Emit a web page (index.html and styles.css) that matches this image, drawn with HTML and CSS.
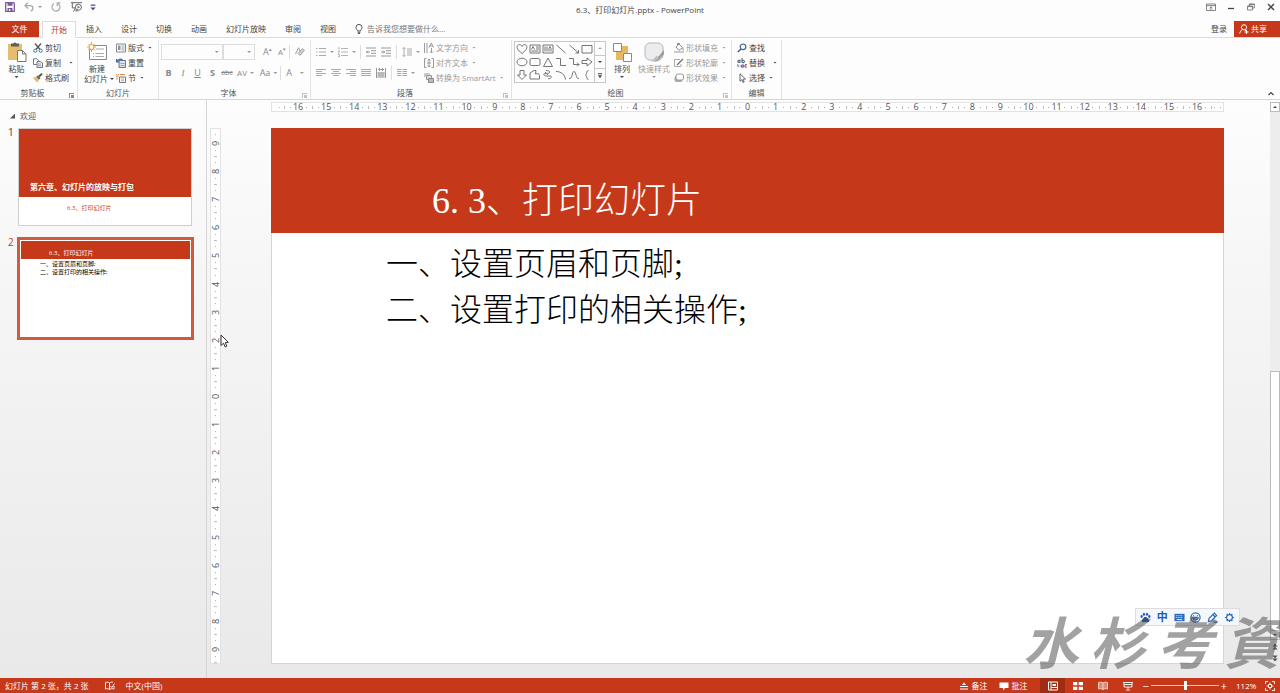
FILE: index.html
```html
<!DOCTYPE html>
<html lang="zh-CN">
<head>
<meta charset="utf-8">
<title>6.3、打印幻灯片.pptx - PowerPoint</title>
<link rel="stylesheet" href="styles.css">
</head>
<body>
<div class="app">
  <header class="titlebar">
    <div class="quick">
      <button class="tool" aria-label="保存"><svg class="ic" viewBox="0 0 10 10"><path d="M.7.7h8l.6.6v8H.7z" fill="#fff" stroke="#7b5a96" stroke-width="1.3"/><path d="M2.5.8h5v3h-5zM2.5 6h5v3.5h-5z" fill="#7b5a96"/><path d="M4 7h1.2v2H4z" fill="#fff"/></svg></button>
      <button class="tool undo" aria-label="撤消"><svg class="ic" viewBox="0 0 10 10"><path d="M4 .8L1 3.6l3 2.8M1 3.6h5.2c3.5 0 3.6 4.6.3 5.6" fill="none" stroke="#aaa" stroke-width="1.3"/></svg><i class="arr dim"></i></button>
      <button class="tool" aria-label="重复"><svg class="ic" viewBox="0 0 10 10"><path d="M3 1.6a4 4 0 1 0 4.2.1M6.2 4.2V.9h3.2" fill="none" stroke="#aaa" stroke-width="1.2"/></svg></button>
      <button class="tool show" aria-label="从头开始"><svg class="ic wide" viewBox="0 0 12 10"><path d="M0 .7h11M1.3.7v5.2h3M4.5 6L2.6 9.5M4.4 8.8h3" fill="none" stroke="#666"/><circle cx="7.4" cy="5.2" r="3" fill="#fff" stroke="#666"/><path d="M6.5 3.6l2.6 1.6-2.6 1.6z" fill="#5a8a8a"/></svg></button>
      <button class="tool custom" aria-label="自定义"><svg class="ic tiny" viewBox="0 0 5 6"><path d="M.5 1h4" stroke="#447"/><path d="M.3 3h4.400L2.500 5.400z" fill="#447"/></svg></button>
    </div>
    <h1 class="doc-title">6.3、打印幻灯片.pptx - PowerPoint</h1>
    <div class="window-tools">
      <button aria-label="功能区选项"><svg class="ic" viewBox="0 0 10 10"><path d="M.5 2h9v6.500h-9zM.5 3.600h9M5 8V4.800M3.500 6.200L5 4.800l1.500 1.400" fill="none" stroke="#666" stroke-width=".8"/></svg></button>
      <button aria-label="最小化"><svg class="ic" viewBox="0 0 10 10"><path d="M2 6.500h6" stroke="#444" stroke-width="1.3"/></svg></button>
      <button aria-label="还原"><svg class="ic" viewBox="0 0 10 10"><path d="M3.300 4V2h5v4H6.500M1.500 4h5v4h-5zM1.500 4.600h5M3.300 2.400h5" fill="none" stroke="#666" stroke-width=".8"/></svg></button>
      <button aria-label="关闭"><svg class="ic" viewBox="0 0 10 10"><path d="M2 2l6 6M8 2L2 8" stroke="#444" stroke-width="1.4"/></svg></button>
    </div>
  </header>

  <nav class="tabs">
    <button class="file">文件</button>
    <button class="tab active">开始</button>
    <button class="tab">插入</button>
    <button class="tab">设计</button>
    <button class="tab">切换</button>
    <button class="tab">动画</button>
    <button class="tab">幻灯片放映</button>
    <button class="tab">审阅</button>
    <button class="tab">视图</button>
    <button class="tell"><svg class="ic" viewBox="0 0 10 10"><path d="M3.500 7c0-1.200-1.500-1.900-1.500-3.600a3 3 0 0 1 6 0C8 5.100 6.500 5.800 6.500 7zM3.600 8.300h2.800M4 9.500h2" fill="none" stroke="#555"/></svg>告诉我您想要做什么...</button>
    <button class="login">登录</button>
    <button class="share"><svg class="ic" viewBox="0 0 10 10"><circle cx="5" cy="3.300" r="2.600" fill="none" stroke="#fff"/><path d="M.8 9.500c.2-2 1.200-3.300 2.800-4M6 6l1 .8M7.500 6v4M5.500 8h4" fill="none" stroke="#fff"/></svg>共享</button>
  </nav>

  <section class="ribbon">
    <div class="group clipboard">
      <div class="body">
        <button class="big paste"><svg class="ic20" viewBox="0 0 20 20"><path d="M1 2h14v16H1z" fill="#e5bd6f"/><path d="M4 3V1.500h2.500a1.700 1.700 0 0 1 3 0H12V4.500H4z" fill="#5d5d5d"/><path d="M10.500 8.500h5l3.500 3.500v7.500h-8.500z" fill="#fff" stroke="#777"/><path d="M15.500 8.500V12H19" fill="none" stroke="#777"/></svg><span>粘贴</span><i class="arr"></i></button>
        <div class="stack">
          <button class="item"><svg class="ic" viewBox="0 0 10 10"><path d="M2 .5l5 6M8 .5l-5 6" stroke="#555" stroke-width="1.300"/><circle cx="2.300" cy="7.700" r="1.600" fill="none" stroke="#3f78a8"/><circle cx="7.700" cy="7.700" r="1.600" fill="none" stroke="#3f78a8"/></svg>剪切</button>
          <button class="item"><svg class="ic" viewBox="0 0 10 10"><path d="M.5.800h3.500l1.500 1.500v4.200h-5z" fill="#fff" stroke="#778"/><path d="M4 3.500h3.500L9.500 5v4.500H4z" fill="#e8edf5" stroke="#678"/><path d="M5 6h3M5 7.700h3" stroke="#678" stroke-width=".6"/></svg>复制<i class="arr far"></i></button>
          <button class="item"><svg class="ic" viewBox="0 0 10 10"><path d="M0 5l3.500-1.500L6 6.500 4.500 9.500z" fill="#e5b661"/><path d="M3.500 3.500l1.500-1 2.500 3L6 6.500z" fill="#555"/><path d="M6 3.500L9 .8" stroke="#555" stroke-width="2"/></svg>格式刷</button>
        </div>
      </div>
      <div class="label">剪贴板<i class="launch"></i></div>
    </div>

    <div class="group slides">
      <div class="body">
        <button class="big newslide"><svg class="ic20" viewBox="0 0 20 20"><path d="M2.500 3.500h17v14h-17z" fill="#fff" stroke="#888"/><path d="M9 7h8M6 11.500h1M8.500 11.500H17M6 14.500h1M8.500 14.500H17" stroke="#aaa"/><circle cx="4.500" cy="5" r="2.500" fill="#fff" stroke="#e0a94a" stroke-width="1.200"/><path d="M4.500 0v2M4.500 8v2M0 5h1.500M7.500 5H9M1.300 1.800l1 1M7.700 1.800l-1 1M1.300 8.200l1-1M7.700 8.200l-1-1" stroke="#e0a94a"/></svg><span>新建</span><span class="with-arr">幻灯片<i class="arr"></i></span></button>
        <div class="stack">
          <button class="item"><svg class="ic" viewBox="0 0 10 10"><path d="M.5 1h9v8h-9z" fill="#fff" stroke="#888"/><path d="M2 2.500h2.500v4.500H2z" fill="#8b93a0"/><path d="M5.500 3h3M5.500 5h3M5.500 7h3" stroke="#999"/></svg>版式<i class="arr"></i></button>
          <button class="item"><svg class="ic" viewBox="0 0 10 10"><path d="M3 2.500h6.500v7H3z" fill="#dde4ec" stroke="#678"/><path d="M4.500 5.500h4M4.500 7.500h4" stroke="#789" stroke-width=".7"/><path d="M.5 1v3h3M.8 3.600C2 1 5 .6 6.500 2" fill="none" stroke="#2f6aa3" stroke-width="1.200"/></svg>重置</button>
          <button class="item"><svg class="ic" viewBox="0 0 10 10"><path d="M0 1.500h1M2 1.500h1M4 1.500h5" stroke="#d98b4c"/><path d="M3.500 4h6v5.500h-6z" fill="#fff" stroke="#777"/><path d="M5 6h3M5 7.700h3" stroke="#888" stroke-width=".7"/><path d="M1 3v4M0 3h3" stroke="#e0a060"/></svg>节<i class="arr"></i></button>
        </div>
      </div>
      <div class="label">幻灯片</div>
    </div>

    <div class="group font">
      <div class="body rows">
        <div class="row">
          <span class="combo name"><input type="text" aria-label="字体"><i class="arr dim"></i></span>
          <span class="combo size"><input type="text" aria-label="字号"><i class="arr dim"></i></span>
          <button class="glyph w15">A<sup>▴</sup></button><button class="glyph small w15">A<sup>▾</sup></button><i class="sep"></i>
          <button class="glyph w20" aria-label="清除格式"><svg class="ic" viewBox="0 0 10 10"><path d="M.5 7L3.500.8 5 4" fill="none" stroke="#999"/><path d="M3 6.500L7.500 1.500 9.500 3.500 5 8.500z" fill="#ccc" stroke="#999" stroke-width=".8"/></svg></button>
        </div>
        <div class="row second">
          <button class="glyph w15"><b>B</b></button><button class="glyph w14 serif"><i>I</i></button><button class="glyph w15"><u>U</u></button><button class="glyph w15"><b>S</b></button><button class="glyph w14 strike">abc</button><button class="glyph w23 spacing">AV<i class="arr dim"></i></button><button class="glyph w23">Aa<i class="arr dim"></i></button><i class="sep"></i><button class="glyph w28">A<i class="arr dim gap8"></i></button>
        </div>
      </div>
      <div class="label">字体<i class="launch dim"></i></div>
    </div>

    <div class="group para">
      <div class="body">
        <div class="rows para-tools">
          <div class="row">
            <button class="tool22" aria-label="项目符号"><svg class="ic" viewBox="0 0 10 10"><path d="M0 1.500h1.500M0 5h1.500M0 8.500h1.500M3 1.500h7M3 5h7M3 8.500h7" stroke="#aaa"/></svg><i class="arr dim"></i></button>
            <button class="tool22" aria-label="编号"><svg class="ic" viewBox="0 0 10 10"><path d="M1 0v2.500M0 4h1.500L0 6h1.500M0 7.500h1.500v2H0M3 1.500h7M3 5h7M3 8.500h7" fill="none" stroke="#aaa" stroke-width=".9"/></svg><i class="arr dim"></i></button>
            <i class="sep"></i>
            <button class="tool15" aria-label="减少缩进"><svg class="ic" viewBox="0 0 10 10"><path d="M0 1h10M5 3.700h5M5 6.300h5M0 9h10M0 5h4M2 3.500L.5 5 2 6.500" fill="none" stroke="#999"/></svg></button>
            <button class="tool15" aria-label="增加缩进"><svg class="ic" viewBox="0 0 10 10"><path d="M0 1h10M5 3.700h5M5 6.300h5M0 9h10M0 5h4M2 3.500L3.500 5 2 6.500" fill="none" stroke="#999"/></svg></button>
            <i class="sep"></i>
            <button class="tool22" aria-label="行距"><svg class="ic" viewBox="0 0 10 10"><path d="M2 .5v9M.5 2L2 .5 3.500 2M.5 8L2 9.500 3.500 8M5 2h5M5 4h5M5 6h5M5 8h5" fill="none" stroke="#aaa"/></svg><i class="arr dim"></i></button>
          </div>
          <div class="row second">
            <button class="tool15" aria-label="左对齐"><svg class="ic" viewBox="0 0 10 10"><path d="M0 1.500h10M0 3.500h6M0 5.500h10M0 7.500h6" stroke="#aaa"/></svg></button>
            <button class="tool15" aria-label="居中"><svg class="ic" viewBox="0 0 10 10"><path d="M0 1.500h10M2 3.500h6M0 5.500h10M2 7.500h6" stroke="#aaa"/></svg></button>
            <button class="tool15" aria-label="右对齐"><svg class="ic" viewBox="0 0 10 10"><path d="M0 1.500h10M4 3.500h6M0 5.500h10M4 7.500h6" stroke="#aaa"/></svg></button>
            <button class="tool15" aria-label="两端对齐"><svg class="ic" viewBox="0 0 10 10"><path d="M0 1.500h10M0 3.500h10M0 5.500h10M0 7.500h10" stroke="#aaa"/></svg></button>
            <button class="tool15" aria-label="分散对齐"><svg class="ic" viewBox="0 0 10 10"><path d="M.5 0v10M9.500 0v10M2 1.500h6M3.500 0v3M6.500 0v3" stroke="#999"/><path d="M1.500 4h7v5.500h-7z" fill="#ccc"/><path d="M1.500 5h7M1.500 7h7M1.500 9h7" stroke="#999" stroke-width=".7"/></svg></button>
            <i class="sep"></i>
            <button class="tool22" aria-label="分栏"><svg class="ic" viewBox="0 0 10 10"><path d="M0 1.500h4.500M0 3.500h4.500M0 5.500h4.500M0 7.500h4.500M5.500 1.500H10M5.500 3.500H10M5.500 5.500H10M5.500 7.500H10" stroke="#aaa"/></svg><i class="arr dim"></i></button>
          </div>
        </div>
        <div class="stack muted">
          <button class="item"><svg class="ic" viewBox="0 0 10 10"><path d="M.5 0v10M3 0v10M5 4.500L7.300 0l2.200 4.500M6 3h3M7.500 5v5M6 8.500L7.500 10 9 8.500" fill="none" stroke="#999"/></svg>文字方向<i class="arr dim"></i></button>
          <button class="item"><svg class="ic" viewBox="0 0 10 10"><path d="M2.500.5h-2v9h2M7.500.5h2v9h-2M5 1v8M3.500 2.500L5 1l1.500 1.500M3.500 7.500L5 9l1.500-1.500M3 5h4" fill="none" stroke="#999"/></svg>对齐文本<i class="arr dim"></i></button>
          <button class="item"><svg class="ic" viewBox="0 0 10 10"><path d="M0 1h6M0 3h6" stroke="#999"/><path d="M2.500 2.500h5v4h-5z" fill="#ddd" stroke="#999"/><path d="M4.500 5.500h5v4h-5z" fill="#bbb" stroke="#888"/></svg>转换为 SmartArt<i class="arr dim"></i></button>
        </div>
      </div>
      <div class="label">段落<i class="launch dim"></i></div>
    </div>

    <div class="group draw">
      <div class="body">
        <div class="gallery">
          <div class="shapes">
            <svg viewBox="0 0 12 12"><path d="M6 10.500C1 6.500.8 4.800 1.200 3.300 2 1 5 1 6 3.500 7 1 10 1 10.800 3.300c.4 1.500.2 3.200-4.800 7.200z"/></svg>
            <svg viewBox="0 0 12 12"><path d="M1 2h10v8H1zM2.500 6.500L4 3.500l1.500 3M7 4h3M7 6h3M2.500 8h7"/></svg>
            <svg viewBox="0 0 12 12"><path d="M1 2h10v8H1zM3 3.500v5M5 3.500v5M7 8.500v-3l1-2 1 2v3"/></svg>
            <svg viewBox="0 0 12 12"><path d="M1.500 2l9 8"/></svg>
            <svg viewBox="0 0 12 12"><path d="M1.500 2l9 8M10.500 7v3h-3"/></svg>
            <svg viewBox="0 0 12 12"><path d="M1 2.500h10v7.500H1z"/></svg>
            <svg viewBox="0 0 12 12"><ellipse cx="6" cy="6" rx="5" ry="3.800"/></svg>
            <svg viewBox="0 0 12 12"><rect x="1" y="2.500" width="10" height="7" rx="1.500"/></svg>
            <svg viewBox="0 0 12 12"><path d="M6 2l4.500 8.500h-9z"/></svg>
            <svg viewBox="0 0 12 12"><path d="M1 2.500h4.500v7H11"/></svg>
            <svg viewBox="0 0 12 12"><path d="M1 2.500h4.500v6H11M9 6.500l2 2-2 2"/></svg>
            <svg viewBox="0 0 12 12"><path d="M1 4.500h5V2l5 4-5 4V7.500H1z"/></svg>
            <svg viewBox="0 0 12 12"><path d="M4 1.500h4V6h2.500L6 10.500 1.500 6H4z"/></svg>
            <svg viewBox="0 0 12 12"><path d="M1 10V4l4-2.500h2L6.500 5c2.500-1 4 0 4 1.500V10z"/></svg>
            <svg viewBox="0 0 12 12"><path d="M4 1.500c5 0 5 3 0 3S3 8 7 7s2 4-1 2.500M3 3l3 3"/></svg>
            <svg viewBox="0 0 12 12"><path d="M1 2.500c5 0 9 3 9.500 8"/></svg>
            <svg viewBox="0 0 12 12"><path d="M1 9.500c4 1 2.500-7 5-7s1.500 8 5 7"/></svg>
            <svg viewBox="0 0 12 12"><path d="M7.500 1.500C5 1.500 6.500 5 4.500 6c2 1 .5 4.500 3 4.500"/></svg>
          </div>
          <div class="rail"><button aria-label="上"><i class="arr dim up"></i></button><button aria-label="下"><i class="arr"></i></button><button aria-label="更多"><i class="arr more"></i></button></div>
        </div>
        <button class="big arrange"><svg class="ic20" viewBox="0 0 20 20"><path d="M8 4h8v7H8zM4 10h7v8H4z" fill="#e7b863"/><path d="M1.500 1.500h8v8h-8zM11.500 11.500h8v8h-8z" fill="#fff" stroke="#888"/></svg><span>排列</span><i class="arr"></i></button>
        <button class="big styles muted"><svg class="ic20" viewBox="0 0 20 20"><rect x="1" y="1" width="18" height="17" rx="5" fill="#ececf0" stroke="#b5b5bb"/><path d="M20 8v4l-6 7-4 1c3-3 3-5 5-6z" fill="#999"/><path d="M6 19c4 0 4-4 7-5l2 2c-2 3-5 4-9 3z" fill="#bbb"/></svg><span>快速样式</span><i class="arr dim"></i></button>
        <div class="stack muted">
          <button class="item"><svg class="ic" viewBox="0 0 10 10"><path d="M2 4l3-3 3.500 3.500-3.500 3zM3.500 2.500V.5h2v1" fill="#fff" stroke="#888"/><path d="M0 8h10v2H0z" fill="#ccc"/><path d="M9 4.500v3" stroke="#888"/></svg>形状填充<i class="arr dim"></i></button>
          <button class="item"><svg class="ic" viewBox="0 0 10 10"><path d="M6 1.500H.5v7H7V6" fill="none" stroke="#aaa"/><path d="M3 7l6-6" stroke="#777" stroke-width="1.500"/></svg>形状轮廓<i class="arr dim"></i></button>
          <button class="item"><svg class="ic" viewBox="0 0 10 10"><rect x=".5" y="3" width="8" height="6" rx="2" fill="#aaa"/><rect x="2" y="1" width="7.500" height="6" rx="2" fill="#fff" stroke="#999"/></svg>形状效果<i class="arr dim"></i></button>
        </div>
      </div>
      <div class="label">绘图<i class="launch dim"></i></div>
    </div>

    <div class="group edit">
      <div class="body">
        <div class="stack">
          <button class="item"><svg class="ic" viewBox="0 0 10 10"><circle cx="6" cy="3.800" r="2.800" fill="none" stroke="#3c6595" stroke-width="1.200"/><path d="M4 6L.8 9" stroke="#3c6595" stroke-width="1.600"/></svg>查找</button>
          <button class="item"><svg class="ic" viewBox="0 0 10 10"><g fill="none" stroke-width="1.100"><path d="M3 1.800v3M3 3.300a1.100 1.100 0 1 0 0 .2M5 0v4.800M5 3.300a1.200 1.200 0 1 1 0 .2" stroke="#567"/><path d="M6.300 6.500v3M6.300 8a1.100 1.100 0 1 0 0 .2M9.800 6.800a1.300 1.300 0 1 0 0 2.300" stroke="#7a4b8c"/></g><path d="M.8 6.200v2h1.500" fill="none" stroke="#357" stroke-width=".8"/></svg>替换<i class="arr far"></i></button>
          <button class="item"><svg class="ic" viewBox="0 0 10 10"><path d="M3 .8v7.500l1.800-1.600L6 9.500l1.200-.6L6 6.200l2.500-.2z" fill="#fff" stroke="#555" stroke-width=".9"/></svg>选择<i class="arr"></i></button>
        </div>
      </div>
      <div class="label">编辑</div>
    </div>
    <button class="collapse" aria-label="折叠功能区"><svg class="ic tiny" viewBox="0 0 6 6"><path d="M.5 4.500L3 2l2.500 2.500" fill="none" stroke="#444" stroke-width="1.200"/></svg></button>
  </section>

  <main class="workspace">
    <aside class="panel">
      <div class="section-name"><i class="tri"></i>欢迎</div>
      <div class="thumb-row"><span class="num">1</span>
        <div class="thumb cover"><div class="thumb-head">第六章、幻灯片的放映与打包</div><div class="thumb-sub">6.3、打印幻灯片</div></div>
      </div>
      <div class="thumb-row"><span class="num current">2</span>
        <div class="thumb selected"><div class="thumb-head">6.3、打印幻灯片</div><div class="thumb-list">一、设置页眉和页脚;<br>二、设置打印的相关操作;</div></div>
      </div>
    </aside>

    <section class="editor">
      <div class="ruler horizontal"><i></i><span>16</span><span>15</span><span>14</span><span>13</span><span>12</span><span>11</span><span>10</span><span>9</span><span>8</span><span>7</span><span>6</span><span>5</span><span>4</span><span>3</span><span>2</span><span>1</span><span>0</span><span>1</span><span>2</span><span>3</span><span>4</span><span>5</span><span>6</span><span>7</span><span>8</span><span>9</span><span>10</span><span>11</span><span>12</span><span>13</span><span>14</span><span>15</span><span>16</span><i></i></div>
      <div class="ruler vertical"><span>9</span><span>8</span><span>7</span><span>6</span><span>5</span><span>4</span><span>3</span><span>2</span><span>1</span><span>0</span><span>1</span><span>2</span><span>3</span><span>4</span><span>5</span><span>6</span><span>7</span><span>8</span><span>9</span></div>
      <article class="slide">
        <h2>6<span class="point">.</span>3、打印幻灯片</h2>
        <p>一、设置页眉和页脚;<br>二、设置打印的相关操作;</p>
      </article>
      <div class="scroll">
        <button aria-label="向上滚动"><i class="arr up"></i></button>
        <div class="track"><div class="handle"></div></div>
        <button aria-label="向下滚动"><i class="arr"></i></button>
        <button class="page" aria-label="上一张"><svg class="ic tiny" viewBox="0 0 6 8"><path d="M0 4l3-3.500L6 4zM0 7.500L3 4l3 3.500z" fill="#555"/></svg></button>
        <button class="page" aria-label="下一张"><svg class="ic tiny" viewBox="0 0 6 8"><path d="M0 .5h6L3 4zM0 4h6L3 7.500z" fill="#555"/></svg></button>
      </div>
    </section>

    <svg class="pointer" viewBox="0 0 9 14"><path d="M1 1v10.500l2.500-2.300L5.200 13l1.600-.8L5.300 8.600l3-.3z" fill="#fff" stroke="#333"/></svg>
    <div class="ime">
      <svg viewBox="0 0 12 12"><path d="M6 5.500c2 0 2.300 2 3.500 3s.5 3-1.500 2.600c-1.500-.3-2.500-.3-4 0-2 .4-2.700-1.600-1.500-2.600S4 5.500 6 5.500z" fill="#1f5bb5"/><g fill="#1f5bb5"><ellipse cx="1.800" cy="5" rx="1.200" ry="1.600"/><ellipse cx="4.300" cy="2.500" rx="1.200" ry="1.700"/><ellipse cx="7.700" cy="2.500" rx="1.200" ry="1.700"/><ellipse cx="10.200" cy="5" rx="1.200" ry="1.600"/></g></svg>
      <b>中</b>
      <svg viewBox="0 0 12 12"><path d="M.5 2h11v8H.5z" fill="#2b69bd"/><path d="M2 4h8M2 6h8" stroke="#fff" stroke-dasharray="1 1"/><path d="M3 8.300h6" stroke="#fff"/></svg>
      <svg viewBox="0 0 12 12" class="line"><circle cx="6" cy="6" r="5"/><path d="M3 6.500c1 3 5 3 6 0zM4 3.500v1.200M8 3.500v1.200"/></svg>
      <svg viewBox="0 0 12 12" class="line"><path d="M1.500 10.500l.8-3.500L8 1.300l2.500 2.500L5 9.500zM6.500 3L9 5.500M7 11h4"/></svg>
      <svg viewBox="0 0 12 12" class="line"><circle cx="6" cy="6" r="3.200"/><path d="M6 1v1.500M6 9.500V11M1 6h1.500M9.500 6H11M3 2l1 1.500M9 2L8 3.500M3 10l1-1.500M9 10l-1-1.500"/></svg>
    </div>
    <div class="watermark"><span>水</span><span>杉</span><span>考</span><span>資</span></div>
  </main>

  <footer class="status">
    <span class="count">幻灯片 第 2 张，共 2 张</span>
    <button class="spell" aria-label="拼写检查"><svg class="ic" viewBox="0 0 10 10"><path d="M4.500 2C3 1 2 1 .5 1.500v6.500c1.500-.5 2.500-.5 4 .5V2C6 1 7 1 8 1.300M4.500 8.500c1.500-1 3-1 4.500-.5V5M5.500 5l1.300 1.500L9.500 2.500" fill="none" stroke="#fff" stroke-width=".9"/></svg></button>
    <button>中文(中国)</button>
    <button class="notes"><svg class="ic small" viewBox="0 0 8 8"><path d="M0 4.500h8M0 7h8" stroke="#fff"/><path d="M2 3l2-2.500L6 3z" fill="#fff"/></svg>备注</button>
    <button class="comments"><svg class="ic" viewBox="0 0 10 10"><path d="M.5 1.500h9v5.500H6L4.500 9.500 4 7H.5z" fill="#fff"/></svg>批注</button>
    <div class="views">
      <button class="on" aria-label="普通视图"><svg class="ic" viewBox="0 0 10 10"><path d="M.5 1h9v8h-9zM3 1v8M3 6.500h6.500" fill="none" stroke="#fff"/><path d="M4.500 3h3.500v2H4.500z" fill="#fff"/></svg></button>
      <button aria-label="幻灯片浏览"><svg class="ic" viewBox="0 0 10 10"><path d="M0 1h4.300v3.300H0zM5.700 1H10v3.300H5.700zM0 5.700h4.300V9H0zM5.700 5.700H10V9H5.700z" fill="#fff"/></svg></button>
      <button aria-label="阅读视图"><svg class="ic" viewBox="0 0 10 10"><path d="M5 2C3.500 1 2 1 .5 1.500V8c1.500-.5 3-.5 4.500.5C6.500 7.500 8 7.500 9.500 8V1.500C8 1 6.500 1 5 2v6.500" fill="#df8b76" stroke="#f3cfc5"/></svg></button>
      <button aria-label="幻灯片放映"><svg class="ic" viewBox="0 0 10 10"><path d="M0 1.500h10M1 3.500h8M1 1.500v4.500h8V1.500M5 6v2M3 9h4" fill="none" stroke="#fff" stroke-width=".9"/></svg></button>
    </div>
    <div class="zoom"><button aria-label="缩小">−</button><input type="range" min="0" max="100" value="51" aria-label="缩放"><button aria-label="放大">+</button></div>
    <button class="percent">112%</button>
    <button class="fit" aria-label="适应窗口"><svg class="ic" viewBox="0 0 10 10"><path d="M.5 3V.5H3M7 .5h2.500V3M9.500 7v2.500H7M3 9.500H.5V7M5 1.500V4M5 6v2.500M1.500 5H4M6 5h2.500M3.500 3.500h3v3h-3z" fill="none" stroke="#fff" stroke-width=".9"/></svg></button>
  </footer>
</div>
</body>
</html>
```
FILE: styles.css
```css
*{box-sizing:border-box}
body{margin:0;font-family:"Open Sans","Noto Sans CJK SC",sans-serif;font-size:8px;line-height:12px;color:#444;background:#fff}
button{display:flex;align-items:center;padding:0;border:0;background:none;font:inherit;color:inherit;white-space:nowrap}
input{font:inherit;margin:0}
i{font-style:normal}
svg{display:block}
.app{display:flex;flex-direction:column;min-height:100vh}
.ic{width:10px;height:10px;flex:none}
.ic.wide{width:12px}
.ic.small{width:8px;height:8px}
.ic.tiny{width:6px;height:7px}
.ic20{width:20px;height:20px}
.arr{flex:none;width:4px;height:2px;background:#444;clip-path:polygon(0 0,100% 0,50% 100%)}
.arr.dim{background:#999}
.arr.up{clip-path:polygon(0 100%,100% 100%,50% 0)}

.titlebar{display:grid;grid-template-columns:1fr auto 1fr;height:21px;align-items:start;background:#fdfdfd}
.quick{display:flex;gap:9px;padding:2px 0 0 5px}
.undo{gap:4px}
.show{margin-left:1px}
.custom{margin-left:-2px}
.doc-title{margin:0;padding-top:4px;font-size:8px;font-weight:400;line-height:12px}
.window-tools{display:flex;justify-content:flex-end;gap:10px;padding:2px 4px 0 0}

.tabs{display:flex;height:17px;border-bottom:1px solid #dcdcdc;background:#fdfdfd}
.file{width:39px;justify-content:center;background:#c5391a;color:#fff}
.tab{padding:0 9px 0 10px}
.tab.active{margin:0 0 0 3px;height:17px;padding:0 8px;border:1px solid #dcdcdc;border-bottom-color:#fdfdfd;background:#fdfdfd;color:#c5391a}
.tell{margin-left:9px;gap:3px;color:#777}
.login{margin-left:auto;margin-right:7px}
.share{width:46px;gap:2px;padding-left:5px;background:#c5391a;color:#fff}

.ribbon{display:flex;height:62px;padding-top:2px;border-bottom:1px solid #d5d5d5;background:#fdfdfd}
.group{display:flex;flex-direction:column;border-right:1px solid #e2e2e2}
.body{display:flex;flex:1}
.label{display:flex;justify-content:center;position:relative;height:12px;color:#555}
.launch{position:absolute;right:3px;bottom:1px;width:5px;height:5px;border-top:1px solid #888;border-left:1px solid #888;background:linear-gradient(#888,#888) 100% 100%/3px 3px no-repeat}
.launch.dim{opacity:.5}
.clipboard{width:78px}.slides{width:81px}.font{width:152px}.para{width:201px}.draw{width:220px}.edit{width:50px}
.clipboard .label,.font .label,.para .label,.draw .label{padding-right:12px}
.big{flex-direction:column;padding-top:2px;line-height:10px}
.big span{margin-top:2px}
.big>.arr{margin-top:2px}
.paste{width:33px}
.newslide{width:38px}
.big .with-arr{display:flex;align-items:center;gap:2px;margin:0 0 0 4px}
.stack{display:flex;flex-direction:column}
.item{height:15px;gap:2px}
.item .arr{margin-left:2px}
.item .arr.far{margin-left:6px}
.muted{color:#999}
.rows{display:flex;flex-direction:column}
.row{display:flex;align-items:center;height:16px;margin-top:4px}
.row.second{margin-top:5px}
.sep{flex:none;width:1px;height:14px;background:#ddd}
.font .body{padding-left:2px}
.combo{display:flex;align-items:center;height:16px;border:1px solid #ddd;padding-right:3px}
.combo input{width:100%;min-width:0;height:14px;border:0;padding:0 2px;background:none}
.combo.name{width:63px}.combo.size{width:33px;margin-right:5px}
.glyph{justify-content:center;font-size:9px;color:#888}
.glyph.small{font-size:8px}
.glyph sup{font-size:5px;line-height:5px;margin-bottom:5px}
.glyph .arr{margin-left:3px}
.glyph .gap8{margin-left:8px}
.serif{font-family:"Liberation Serif",serif}
.serif i{font-style:italic}
.strike{font-size:7px;text-decoration:line-through}
.spacing{font-size:8px}
.w14{width:14px}.w15{width:15px}.w20{width:20px}.w23{width:23px}.w28{width:28px}
.para-tools{width:113px;padding-left:5px}
.tool22,.tool15{height:14px}
.tool22{width:22px;gap:4px}
.tool15{width:15px}
.para-tools .sep+button{margin-left:5px}
.gallery{display:flex;width:92px;height:42px;margin:1px 0 0 2px;border:1px solid #c8c8c8}
.shapes{flex:1;display:grid;grid-template-columns:repeat(6,1fr);align-items:center;justify-items:center}
.shapes svg{width:12px;height:12px;fill:none;stroke:#666;stroke-width:.9}
.rail{display:flex;flex-direction:column;width:11px;border-left:1px solid #c8c8c8}
.rail button{flex:1;justify-content:center}
.rail button+button{border-top:1px solid #c8c8c8}
.more{height:5px;clip-path:polygon(0 0,100% 0,100% 1px,0 1px,0 2px,100% 2px,50% 100%,0 2px)}
.arrange,.styles{width:32px}
.draw .stack{margin-left:4px}
.edit .stack{padding-left:5px}
.collapse{margin:auto 6px 3px auto;height:6px}

.workspace{position:relative;display:flex;flex:1;background:linear-gradient(#fdfdfd,#f5f5f5 35%,#e9e9e9)}
.panel{width:207px;flex:none;border-right:1px solid #d5d5d5;padding-top:10px}
.section-name{display:flex;align-items:center;gap:5px;padding-left:10px;color:#555}
.tri{width:5px;height:5px;background:#555;clip-path:polygon(100% 0,100% 100%,0 100%)}
.thumb-row{display:flex;align-items:flex-start;margin:6px 0 10px}
.num{width:18px;padding-left:8px;font-size:10px;line-height:8px}
.num.current{color:#c5391a;padding-top:2px}
.thumb{width:174px;height:98px;border:1px solid #d0d0d0;background:#fff}
.thumb-head{display:flex;background:#c5391a;color:#fff}
.cover .thumb-head{height:68px;align-items:end;justify-content:center;padding:0 46px 4px 0;font-weight:700;white-space:nowrap}
.cover .thumb-sub{padding:5px 0 0 48px;font-size:6px;color:#c5391a}
.selected{border-color:#fff;outline:3px solid #cf5b3f;width:171px;height:97px;margin:4px 0 0 2px}
.selected .thumb-head{height:18px;padding:6px 0 0 28px;font-size:6px}
.selected .thumb-list{padding:1px 0 0 19px;font-size:6px;line-height:8px;color:#000}

.editor{flex:1;display:grid;grid-template-columns:12px 50px 1fr 46px 10px;grid-template-rows:10px auto;row-gap:16px;align-content:start;padding:2px 0 0 2px}
.ruler{display:flex;background:#fff;border:1px solid #e2e2e2;color:#555;font-size:9px;line-height:8px}
.ruler span{flex:1;display:flex;align-items:center;justify-content:center}
.horizontal{grid-area:1/3}
.horizontal i{width:12px;background:linear-gradient(#bbb,#bbb) 7px 50%/1px 1px no-repeat}
.horizontal i:last-child,.horizontal span{background:linear-gradient(#bbb,#bbb) 0 50%/1px 3px no-repeat,linear-gradient(#aaa,#aaa) 22% 50%/1px 1px no-repeat,linear-gradient(#aaa,#aaa) 80% 50%/1px 1px no-repeat}
.vertical{grid-area:2/1;flex-direction:column;width:11px;height:100%;margin-left:1px}
.vertical span{writing-mode:vertical-rl;transform:rotate(180deg);background:linear-gradient(#bbb,#bbb) 50% 0/3px 1px no-repeat,linear-gradient(#aaa,#aaa) 50% 22%/1px 1px no-repeat,linear-gradient(#aaa,#aaa) 50% 80%/1px 1px no-repeat}
.slide{grid-area:2/3;aspect-ratio:16/9;background:#fff;border:1px solid #d5d5d5;border-top:0;font-family:"Liberation Serif","Noto Sans CJK SC",serif;font-weight:300}
.slide h2{margin:0 -1px;height:105px;padding:49px 0 0 161px;background:#c5391a;color:#fff;font-size:36px;line-height:48px;font-weight:300}
.point{display:inline-block;width:18px}
.slide p{margin:0;padding:8px 0 0 114px;font-size:32px;line-height:46px;color:#000}
.scroll{grid-area:1/5/3/6;display:flex;flex-direction:column}
.scroll button{height:10px;border:1px solid #bbb;background:#fff;justify-content:center}
.scroll .page{height:12px;border:0;background:none}
.track{flex:1;background:#ededed;display:flex;align-items:flex-end}
.handle{width:100%;height:50%;border:1px solid #bbb;border-bottom:0;background:#fff}
.pointer{position:absolute;left:220px;top:234px;width:9px;height:14px}
.ime{position:absolute;right:40px;bottom:52px;display:flex;align-items:center;justify-content:space-between;width:105px;height:18px;padding:0 4px;border:1px solid #ddd;background:#f4f7fc;color:#1f5bb5;font-size:11px}
.ime svg{width:11px;height:11px}
.ime .line{fill:none;stroke:#2b69bd;stroke-width:1.3}
.watermark{position:absolute;right:0;bottom:4px;display:flex;gap:11px;font-size:56px;line-height:64px;font-weight:700;font-style:italic;color:rgba(70,70,70,.5);pointer-events:none}

.status{display:flex;align-items:center;height:15px;padding:0 5px;background:#c5391a;color:#fff}
.spell{margin:0 11px 0 16px}
.notes{margin-left:auto;gap:3px}
.comments{margin:0 13px 0 12px;gap:2px}
.views{display:flex;height:15px}
.views button{width:25px;justify-content:center}
.views .on{background:#9e2d14}
.zoom{display:flex;align-items:center;gap:2px;margin:0 9px 0 2px;font-size:11px}
.zoom input{appearance:none;width:68px;height:9px;background:linear-gradient(#f0c8be,#f0c8be) 0 50%/100% 1px no-repeat}
.zoom input::-webkit-slider-thumb{appearance:none;width:3px;height:9px;background:#fff}
.percent{width:29px}
```
